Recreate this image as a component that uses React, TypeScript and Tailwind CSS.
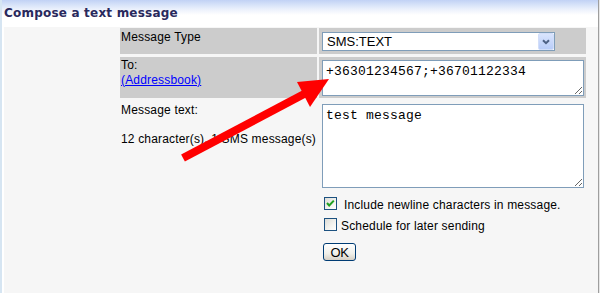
import React from "react";

function CheckBox({ checked }: { checked?: boolean }) {
  return (
    <div className="relative h-[13px] w-[13px] shrink-0 border border-[#1c5180] bg-[linear-gradient(135deg,#dcdcd7_0%,#f4f4f0_60%,#ffffff_100%)]">
      {checked && (
        <svg className="absolute left-0 top-0" width="11" height="11" viewBox="0 0 11 11">
          <path d="M2 5 L4.2 7.5 L8.8 2.6" fill="none" stroke="#21a121" strokeWidth="2" />
        </svg>
      )}
    </div>
  );
}

export default function App() {
  return (
    <div className="relative h-[293px] w-[600px] overflow-hidden bg-[#e6e6e6] font-['Liberation_Sans',Arial,sans-serif] text-[12px] leading-[14px] tracking-[0.17px] text-black">
      <div className="flex h-full w-[599px] flex-col border-l-2 border-r border-l-[#d6e5f2] border-r-[#9e9e9e]">
        <div className="h-[27px] shrink-0 bg-[linear-gradient(to_bottom,#c1d2f5_0px,#d3e0f8_4px,#eaf0fc_9px,#ffffff_15px)] pl-[2px] pt-[6px]">
          <div className="font-['DejaVu_Sans',Verdana,sans-serif] text-[12px] font-bold leading-[14px] tracking-[0.2px] text-[#29295c]">
            Compose a text message
          </div>
        </div>
        <div className="flex-1 border-l-2 border-l-white bg-[#f6f6f6] pl-[116px] pt-[1px]">
          <div className="grid grid-cols-[197px_267px] gap-x-[2px]">
            {/* Row 1 */}
            <div className="h-[26px] bg-[#cccccc] pl-[1px] pt-[2px]">Message Type</div>
            <div className="h-[26px] bg-[#cccccc] pl-[3px] pt-[4px]">
              <div className="relative flex h-[19px] w-[233px] items-center border border-[#7f9db9] bg-white pl-[4px] text-[13px] tracking-normal">
                <span className="leading-[15px]">SMS:TEXT</span>
                <div className="absolute right-0 top-0 flex h-[17px] w-[16px] items-center justify-center rounded-[2px] border border-[#d2def9] bg-[linear-gradient(to_bottom,#d9e4fd,#b9cdf9)]">
                  <svg width="8" height="6" viewBox="0 0 8 6">
                    <path d="M1 1.2 L4 4.2 L7 1.2" fill="none" stroke="#4d6185" strokeWidth="2" />
                  </svg>
                </div>
              </div>
            </div>
            {/* Row 2 */}
            <div className="mt-[3px] h-[41px] bg-[#cccccc] pl-[1px] pt-[1px] leading-[15px]">
              <div>To:</div>
              <a className="text-[#0000ff] underline">(Addressbook)</a>
            </div>
            <div className="mt-[3px] h-[41px] bg-[#cccccc] pl-[3px] pt-[3px]">
              <textarea
                readOnly
                value="+36301234567;+36701122334"
                className="block h-[36px] w-[262px] border border-[#7f9db9] bg-white px-[3px] pt-[3px] font-['Liberation_Mono','Courier_New',monospace] text-[13px] leading-[15px] tracking-[0.2px] text-black outline-none"
              />
            </div>
            {/* Row 3 */}
            <div className="mt-[3px] pl-[1px] pt-[2px] leading-[14.5px]">
              <div>Message text:</div>
              <div>&nbsp;</div>
              <div>12 character(s), 1 SMS message(s)</div>
            </div>
            <div className="mt-[3px] pl-[3px] pt-[3px]">
              <textarea
                readOnly
                value="test message"
                className="block h-[84px] w-[262px] border border-[#7f9db9] bg-white px-[3px] pt-[3px] font-['Liberation_Mono','Courier_New',monospace] text-[13px] leading-[15px] tracking-[0.2px] text-black outline-none"
              />
              <div className="mt-[9px] flex items-start pl-[2px]">
                <CheckBox checked />
                <span className="ml-[7px] mt-[1px]">Include newline characters in message.</span>
              </div>
              <div className="mt-[6px] flex items-start pl-[2px]">
                <CheckBox />
                <span className="ml-[4px] mt-[1px]">Schedule for later sending</span>
              </div>
              <div className="mt-[10px] pl-[1px]">
                <div className="flex h-[18px] w-[33px] items-center justify-center rounded-[3px] border border-[#003c74] bg-[linear-gradient(to_bottom,#ffffff,#f0f0ea_60%,#d6d0c5)] text-[13px] leading-[15px] tracking-[-0.3px]">
                  OK
                </div>
              </div>
            </div>
          </div>
        </div>
      </div>
      <svg className="pointer-events-none absolute left-0 top-0" width="600" height="293" viewBox="0 0 600 293">
        <line x1="183" y1="158" x2="306" y2="93" stroke="#ff0000" strokeWidth="8" strokeLinecap="butt" />
        <polygon points="297,82 329,79 310,107" fill="#ff0000" />
      </svg>
    </div>
  );
}
